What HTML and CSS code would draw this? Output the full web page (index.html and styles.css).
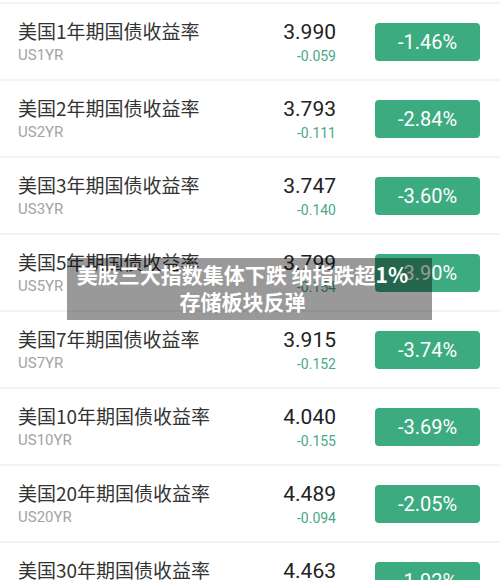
FILE: index.html
```html
<!DOCTYPE html>
<html lang="zh-CN">
<head>
  <meta charset="UTF-8">
  <meta name="viewport" content="width=device-width, initial-scale=1.0">
  <title>美国国债收益率</title>
  <link rel="stylesheet" href="styles.css">
</head>
<body>

<div class="screen">
  <div class="bond-list">
    <div class="bond-row">
      <div class="bond-info">
        <div class="bond-name">美国1年期国债收益率</div>
        <div class="bond-code">US1YR</div>
      </div>
      <div class="bond-quote">
        <div class="bond-price">3.990</div>
        <div class="bond-change">-0.059</div>
      </div>
      <div class="bond-badge">-1.46%</div>
    </div>
    <div class="bond-row">
      <div class="bond-info">
        <div class="bond-name">美国2年期国债收益率</div>
        <div class="bond-code">US2YR</div>
      </div>
      <div class="bond-quote">
        <div class="bond-price">3.793</div>
        <div class="bond-change">-0.111</div>
      </div>
      <div class="bond-badge">-2.84%</div>
    </div>
    <div class="bond-row">
      <div class="bond-info">
        <div class="bond-name">美国3年期国债收益率</div>
        <div class="bond-code">US3YR</div>
      </div>
      <div class="bond-quote">
        <div class="bond-price">3.747</div>
        <div class="bond-change">-0.140</div>
      </div>
      <div class="bond-badge">-3.60%</div>
    </div>
    <div class="bond-row">
      <div class="bond-info">
        <div class="bond-name">美国5年期国债收益率</div>
        <div class="bond-code">US5YR</div>
      </div>
      <div class="bond-quote">
        <div class="bond-price">3.799</div>
        <div class="bond-change">-0.154</div>
      </div>
      <div class="bond-badge">-3.90%</div>
    </div>
    <div class="bond-row">
      <div class="bond-info">
        <div class="bond-name">美国7年期国债收益率</div>
        <div class="bond-code">US7YR</div>
      </div>
      <div class="bond-quote">
        <div class="bond-price">3.915</div>
        <div class="bond-change">-0.152</div>
      </div>
      <div class="bond-badge">-3.74%</div>
    </div>
    <div class="bond-row">
      <div class="bond-info">
        <div class="bond-name">美国10年期国债收益率</div>
        <div class="bond-code">US10YR</div>
      </div>
      <div class="bond-quote">
        <div class="bond-price">4.040</div>
        <div class="bond-change">-0.155</div>
      </div>
      <div class="bond-badge">-3.69%</div>
    </div>
    <div class="bond-row">
      <div class="bond-info">
        <div class="bond-name">美国20年期国债收益率</div>
        <div class="bond-code">US20YR</div>
      </div>
      <div class="bond-quote">
        <div class="bond-price">4.489</div>
        <div class="bond-change">-0.094</div>
      </div>
      <div class="bond-badge">-2.05%</div>
    </div>
    <div class="bond-row">
      <div class="bond-info">
        <div class="bond-name">美国30年期国债收益率</div>
        <div class="bond-code">US30YR</div>
      </div>
      <div class="bond-quote">
        <div class="bond-price">4.463</div>
        <div class="bond-change">-0.087</div>
      </div>
      <div class="bond-badge">-1.92%</div>
    </div>
  </div>

  <div class="caption">
    <div>美股三大指数集体下跌 纳指跌超1%</div>
    <div>存储板块反弹</div>
  </div>
</div>

</body>
</html>
```

FILE: styles.css
```css
body {
  margin: 0;
  background: #fff;
  font-family: Roboto, "Noto Sans CJK SC", sans-serif;
}
.screen {
  position: relative;
  height: 580px;
  overflow: hidden;
}
.bond-list {
  padding-top: 2px;
}
.bond-row {
  display: flex;
  align-items: center;
  height: 75px;
  border-top: 2px solid #f3f3f3;
  padding: 0 20px 0 18px;
}
.bond-info {
  flex: 1;
}
.bond-name {
  font-family: "Noto Sans CJK SC", sans-serif;
  font-size: 19px;
  line-height: 24px;
  color: #333;
}
.bond-code {
  font-size: 15px;
  line-height: 20px;
  margin-top: 2px;
  color: #a3a3a3;
}
.bond-quote {
  text-align: right;
}
.bond-price {
  font-size: 21px;
  line-height: 26px;
  color: #222;
}
.bond-change {
  font-size: 14px;
  line-height: 18px;
  margin-top: 2px;
  color: #4aa884;
}
.bond-badge {
  width: 105px;
  height: 38px;
  margin-left: 39px;
  border-radius: 4px;
  background: #3dab80;
  color: #fff;
  font-size: 20px;
  line-height: 38px;
  text-align: center;
}
.caption {
  position: absolute;
  left: 67px;
  top: 258px;
  width: 351px;
  padding: 3px 14px 5px 0;
  background: rgba(0, 0, 0, 0.4);
  color: #fff;
  font-family: "Noto Sans CJK SC", sans-serif;
  font-weight: bold;
  font-size: 21px;
  line-height: 27px;
  text-align: center;
}
```
